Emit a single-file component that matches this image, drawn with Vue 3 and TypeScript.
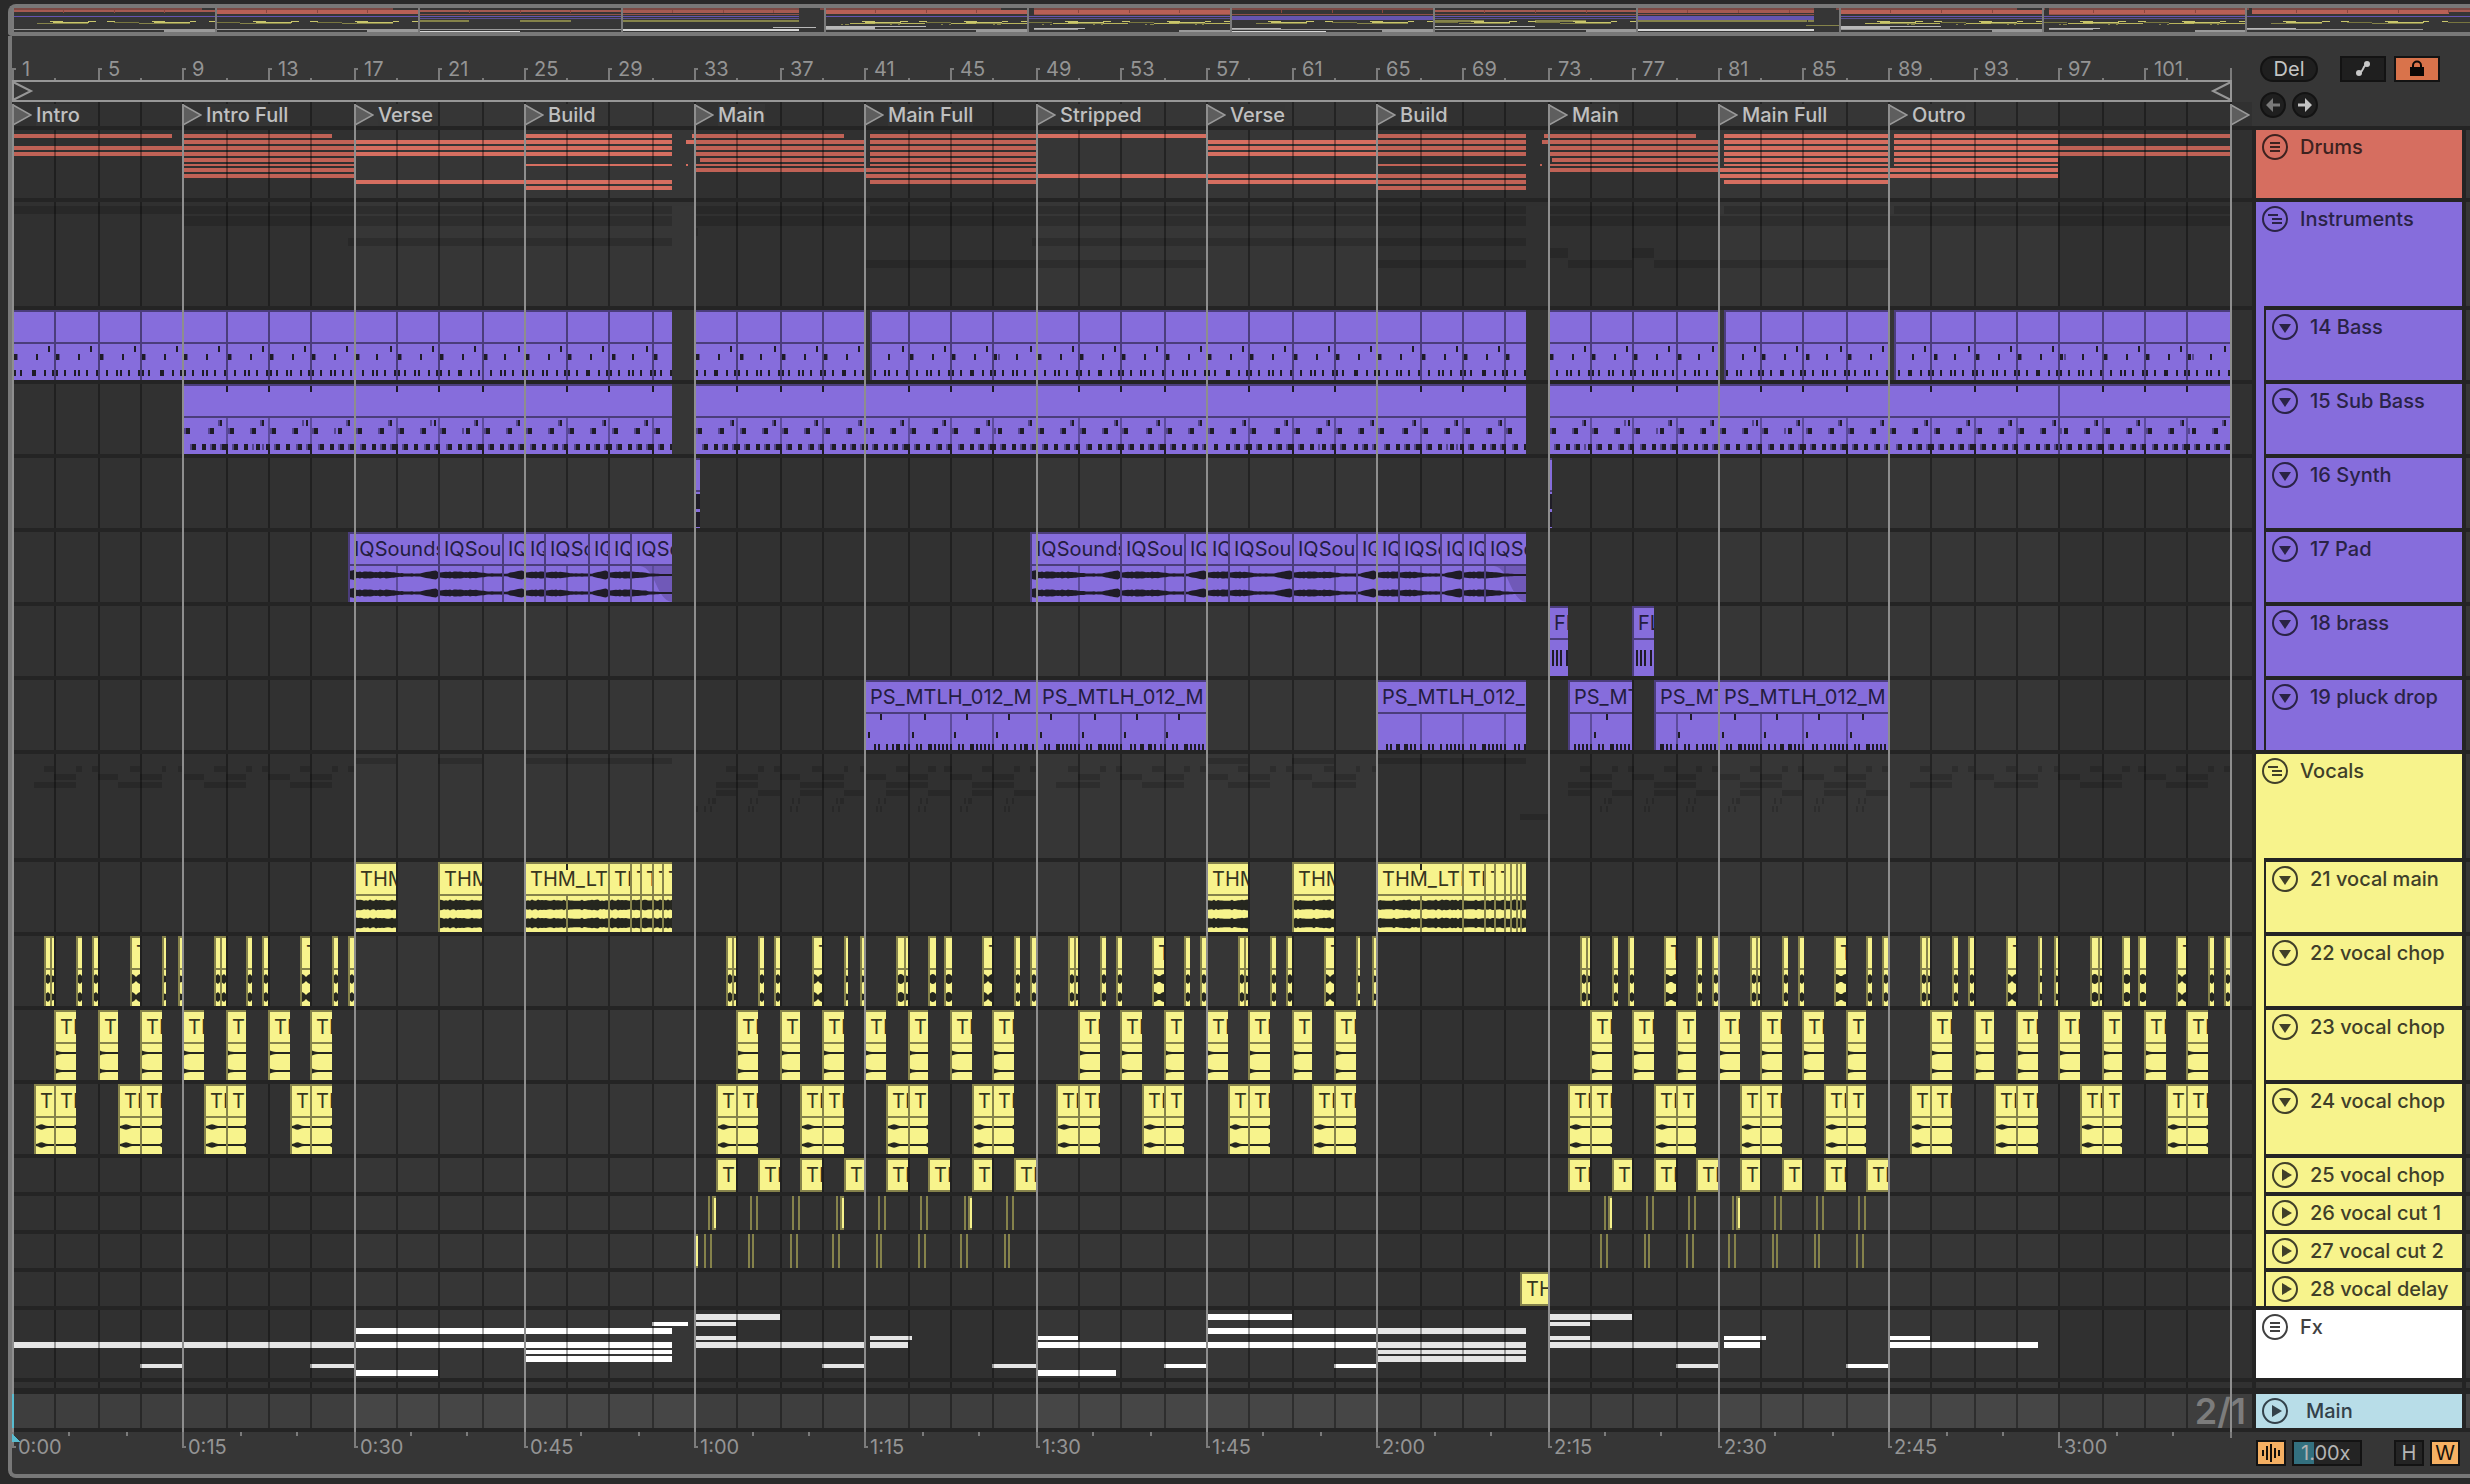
<script setup lang="ts">
import { computed, onBeforeUnmount, onMounted, ref } from 'vue'

type Span = [number, number]
type Kind = 'bass' | 'sub' | 'synth' | 'pad' | 'brass' | 'pluck' | 'vocal' | 'chop' | 'tail' | 'pair' | 'plain'
type Size = 'group' | 'large' | 'tall' | 'short'

interface Track {
  name: string
  tone: string
  size: Size
  title?: string
  kind?: Kind
  clips?: Span[]
  child?: boolean
  ghost?: boolean
  rows?: PreviewRow[]
}
interface PreviewRow {
  y: number
  h: number
  spans: Span[]
}

const BARS = 104

/* ---------- horizontal scale ---------- */
const laneEl = ref<HTMLElement | null>(null)
const laneWidth = ref(window.innerWidth - 230)
let observer: ResizeObserver | undefined
onMounted(() => {
  observer = new ResizeObserver(() => {
    if (laneEl.value) laneWidth.value = laneEl.value.clientWidth
  })
  if (laneEl.value) observer.observe(laneEl.value)
})
onBeforeUnmount(() => observer?.disconnect())

const perBar = computed(() => (laneWidth.value - 22.5) / BARS)
const snap = (bar: number) => 2 * Math.round((bar * perBar.value) / 2 - 0.03)

/* ---------- arrangement data ---------- */
const locators = [
  { bar: 0, name: 'Intro' },
  { bar: 8, name: 'Intro Full' },
  { bar: 16, name: 'Verse' },
  { bar: 24, name: 'Build' },
  { bar: 32, name: 'Main' },
  { bar: 40, name: 'Main Full' },
  { bar: 48, name: 'Stripped' },
  { bar: 56, name: 'Verse' },
  { bar: 64, name: 'Build' },
  { bar: 72, name: 'Main' },
  { bar: 80, name: 'Main Full' },
  { bar: 88, name: 'Outro' },
  { bar: 104, name: '' },
]

const every = (from: number, to: number, step: number, length = step): Span[] => {
  const out: Span[] = []
  for (let b = from; b < to; b += step) out.push([b, Math.min(b + length, to)])
  return out
}
const cuts = (...points: number[]): Span[] =>
  points.slice(1).map((p, i): Span => [points[i], p])

const phrases = [0, 8, 32, 40, 48, 56, 72, 80, 88, 96]
const chopShape: Span[] = [[1.5, 1.8], [1.8, 2], [3, 3.3], [3.75, 4.05], [5.5, 6], [7, 7.25], [7.75, 8]]
const stabs = [2, 4, 6, 8, 10, 12, 14, 34, 36, 38, 40, 42, 44, 46, 50, 52, 54, 56, 58, 60, 62,
  74, 76, 78, 80, 82, 84, 86, 90, 92, 94, 96, 98, 100, 102]
const pairs = [1, 5, 9, 13, 33, 37, 41, 45, 49, 53, 57, 61, 73, 77, 81, 85, 89, 93, 97, 101]

const thin = (bars: number[]): Span[] => bars.map((b): Span => [b, b + 0.09])

const drumRows: PreviewRow[] = [
  { y: 4, h: 4, spans: [[0, 7.5], [8, 15], [24, 31], [31.85, 39], [40.25, 56], [64, 71], [71.85, 79], [80, 80.12], [80.25, 88.12], [88.25, 104]] },
  { y: 10, h: 4, spans: [[8, 31], [31.65, 40], [40.25, 48], [56, 71], [71.75, 80], [80.25, 88], [88.25, 96]] },
  { y: 16, h: 4, spans: [[0, 31], [32, 40], [40.25, 48], [56, 71], [72, 80], [80.25, 88], [88.25, 104]] },
  { y: 22, h: 4, spans: [[0, 31], [32, 40], [40.25, 48], [56, 71], [72, 80], [80.25, 88], [88.25, 104]] },
  { y: 28, h: 4, spans: [[8, 16], [32.25, 40], [40.25, 48], [72.2, 80], [80.25, 88], [88.25, 96]] },
  { y: 34, h: 2, spans: [[8, 16], [24, 31], [31.65, 31.75], [32, 40], [40.25, 48], [64, 71], [71.7, 71.8], [72, 80], [80.25, 88], [88.25, 96]] },
  { y: 38, h: 4, spans: [[8, 16], [32, 48], [72, 96]] },
  { y: 44, h: 4, spans: [[8, 16], [40, 71], [80, 96]] },
  { y: 50, h: 4, spans: [[16, 31], [40.25, 48], [56, 71], [80.25, 88]] },
  { y: 56, h: 4, spans: [[24, 31], [64, 71]] },
]
const instrumentRows: PreviewRow[] = [
  { y: 4, h: 8, spans: [[0, 31], [32, 40], [40.25, 71], [72, 80], [80.25, 88], [88.25, 104]] },
  { y: 14, h: 10, spans: [[8, 31], [32, 71], [72, 104]] },
  { y: 26, h: 8, spans: [[32, 32.2], [72, 72.1]] },
  { y: 36, h: 8, spans: [[15.8, 31], [47.8, 71]] },
  { y: 46, h: 10, spans: [[72, 73], [76, 77]] },
  { y: 58, h: 8, spans: [[40, 56], [64, 71], [73, 76], [77, 88]] },
]
const fxRows: PreviewRow[] = [
  { y: 4, h: 6, spans: [[32, 36], [56, 60], [72, 76]] },
  { y: 12, h: 4, spans: [[30, 31.7], [32, 34], [72, 74]] },
  { y: 18, h: 6, spans: [[16, 31], [56, 71]] },
  { y: 26, h: 4, spans: [[32, 34], [40.25, 42.25], [48, 50], [72, 74], [80.25, 82.25], [88, 90]] },
  { y: 32, h: 6, spans: [[0, 31], [32, 40], [40.25, 42], [48, 71], [72, 80], [80.25, 82], [88, 95]] },
  { y: 40, h: 4, spans: [[24, 31], [64, 71]] },
  { y: 46, h: 6, spans: [[24, 31], [64, 71]] },
  { y: 54, h: 4, spans: [[6, 8], [14, 16], [38, 40], [46, 48], [54, 56], [62, 64], [78, 80], [86, 88]] },
  { y: 60, h: 6, spans: [[16, 20], [48, 51.8]] },
]

const instruments: Track[] = [
  {
    name: '14 Bass', tone: 'purple', size: 'tall', kind: 'bass', child: true,
    clips: [...every(0, 31, 2), ...every(32, 40, 2), [40.25, 42], ...every(42, 71, 2), ...every(72, 80, 2),
      [80.25, 82], ...every(82, 88, 2), [88.25, 90], ...every(90, 104, 2)],
  },
  { name: '15 Sub Bass', tone: 'purple', size: 'tall', kind: 'sub', child: true, clips: [[8, 31], [32, 71], [72, 96], [96, 104]] },
  { name: '16 Synth', tone: 'purple', size: 'tall', kind: 'synth', child: true, clips: [[32, 32.27], [72, 72.22]] },
  {
    name: '17 Pad', tone: 'purple', size: 'tall', kind: 'pad', title: 'IQSounds_Pad', child: true,
    clips: [...cuts(15.8, 20, 23, 24, 25, 27, 28, 29, 31), ...cuts(47.75, 52, 55, 56, 57, 60, 63, 64, 65, 67, 68, 69, 71)],
  },
  { name: '18 brass', tone: 'purple', size: 'tall', kind: 'brass', title: 'FL', child: true, clips: [[72, 73], [76, 77]] },
  {
    name: '19 pluck drop', tone: 'purple', size: 'tall', kind: 'pluck', title: 'PS_MTLH_012_M', child: true,
    clips: [[40, 48], [48, 56], [64, 71], [73, 76], [77, 80], [80, 88]],
  },
]

const vocals: Track[] = [
  {
    name: '21 vocal main', tone: 'yellow', size: 'tall', kind: 'vocal', title: 'THM_LTH', child: true,
    clips: [[16, 18], [20, 22], ...cuts(24, 28, 29, 29.5, 30, 30.5, 31), [56, 58], [60, 62],
      ...cuts(64, 68, 69, 69.5, 70, 70.25, 70.5, 70.75, 71)],
  },
  {
    name: '22 vocal chop', tone: 'yellow', size: 'tall', kind: 'chop', title: 'THM', child: true,
    clips: phrases.flatMap((p) => chopShape.map(([a, b]): Span => [p + a, p + b])),
  },
  { name: '23 vocal chop', tone: 'yellow', size: 'tall', kind: 'tail', title: 'THM', child: true, clips: stabs.map((b): Span => [b, b + 1]) },
  {
    name: '24 vocal chop', tone: 'yellow', size: 'tall', kind: 'pair', title: 'THM', child: true,
    clips: pairs.flatMap((b): Span[] => [[b, b + 1], [b + 1, b + 2]]),
  },
  {
    name: '25 vocal chop', tone: 'yellow', size: 'short', kind: 'plain', title: 'THM', child: true,
    clips: [...every(33, 48, 2, 1), ...every(73, 88, 2, 1)],
  },
  {
    name: '26 vocal cut 1', tone: 'yellow', size: 'short', kind: 'plain', child: true,
    clips: [...thin([32.65, 34.6, 34.9, 36.6, 36.9, 38.65, 40.6, 40.9, 42.6, 42.9, 44.65, 46.6, 46.9,
      74.65, 76.6, 76.9, 78.6, 78.9, 80.65, 82.6, 82.9, 84.6, 84.9, 86.6, 86.9]),
      [32.83, 33], [38.83, 39], [44.83, 45], [74.83, 75], [80.83, 81]],
  },
  {
    name: '27 vocal cut 2', tone: 'yellow', size: 'short', kind: 'plain', child: true,
    clips: [[32, 32.18], ...thin([32.5, 32.75, 34.5, 34.7, 36.5, 36.8, 38.5, 38.75, 40.55, 40.72, 42.5, 42.8, 44.45, 44.75, 46.5, 46.7,
      74.5, 74.75, 76.5, 76.72, 78.5, 78.75, 80.5, 80.75, 82.5, 82.7, 84.5, 84.7, 86.5, 86.75])],
  },
  { name: '28 vocal delay', tone: 'yellow', size: 'short', kind: 'plain', title: 'THM', child: true, clips: [[70.7, 72]] },
]
const vocalRows: PreviewRow[] = vocals.map((t, i) => ({ y: 4 + 8 * i, h: 6, spans: t.clips ?? [] }))

const drums: Track = { name: 'Drums', tone: 'red', size: 'group', rows: drumRows }
const instrumentGroup: Track = { name: 'Instruments', tone: 'purple', size: 'large', rows: instrumentRows, ghost: true }
const vocalGroup: Track = { name: 'Vocals', tone: 'yellow', size: 'large', rows: vocalRows, ghost: true }
const fx: Track = { name: 'Fx', tone: 'white', size: 'group', rows: fxRows }

const groups = [
  { head: drums, children: [] as Track[] },
  { head: instrumentGroup, children: instruments },
  { head: vocalGroup, children: vocals },
  { head: fx, children: [] as Track[] },
]
const tracks = groups.flatMap((g) => [g.head, ...g.children])

/* ---------- drawing helpers ---------- */
const rect = (x: number, y: number, w: number, h: number) => `M${x} ${y}h${w}v${h}h${-w}z`

const gridPath = computed(() => {
  let d = ''
  for (let b = 2; b <= BARS; b += 2) d += rect(snap(b), 0, 2, 120)
  return d
})
const shadePath = computed(() => {
  let d = ''
  for (let b = 0; b < BARS; b += 32) {
    const x = snap(b)
    d += rect(x, 0, (b + 16 > BARS ? laneWidth.value : snap(b + 16)) - x, 120)
  }
  return d
})
const rowsPath = (rows: PreviewRow[]) =>
  rows.map((r) => r.spans.map(([a, b]) => rect(snap(a), r.y, Math.max(2, snap(b) - snap(a)), r.h)).join('')).join('')

const clipWidth = ([a, b]: Span) => Math.max(2, snap(b) - snap(a))
const bounds = (clip: Span) => ({ left: `${snap(clip[0])}px`, width: `${clipWidth(clip)}px` })

/* marks inside a clip, measured from the clip's inner left edge */
const marks = (clip: Span, offsets: [number, number][], y: number, h: number) => {
  const origin = snap(clip[0]) + 2
  let d = ''
  for (let b = Math.floor(clip[0] / 2) * 2; b < clip[1]; b += 2) {
    for (const [o, w] of offsets) {
      const at = b + o
      if (at >= clip[0] && at < clip[1]) d += rect(snap(at) - origin, y, w, h)
    }
  }
  return d
}
const pluckSteps = [0, 0.4, 0.6, 0.95, 1.02, 1.25, 1.42, 1.6, 1.8].map((o): [number, number] => [o, 2])

/* every second bar line inside a clip */
const barLines = (clip: Span, y: number, h: number) => {
  let d = ''
  for (let b = Math.floor(clip[0] / 2) * 2 + 2; b < clip[1]; b += 2) d += rect(snap(b) - snap(clip[0]) - 2, y, 2, h)
  return d
}

const notes = (kind: Kind, clip: Span) => {
  if (kind === 'bass')
    return marks(clip, [[1.7, 2]], 2, 6) + marks(clip, [[0.1, 3], [1.12, 2]], 10, 6) +
      marks(clip, [[0.07, 2], [0.42, 2], [0.9, 2], [1.06, 2], [1.47, 2], [1.9, 2]], 26, 6)
  if (kind === 'sub')
    return marks(clip, [[1.75, 2]], 2, 6) + marks(clip, [[0.2, 4], [1.25, 4]], 10, 6) +
      marks(clip, [[0.02, 2], [0.42, 4], [0.9, 4], [1.4, 4], [1.87, 4]], 26, 6) + barLines(clip, 30, 6)
  if (kind === 'pluck')
    return (clip[0] === 64 ? '' : marks(clip, [[0.73, 2]], 0, 6) + marks(clip, [[0.17, 2]], 18, 6)) +
      marks(clip, pluckSteps, 30, 6)
  if (kind === 'brass') return rect(2, 10, 2, 16) + rect(6, 10, 2, 16) + rect(10, 10, 2, 16) + rect(16, 10, 2, 16)
  if (kind === 'synth') return rect(0, 2, 4, 15) + rect(0, 20, 4, 15)
  return ''
}
const softNotes = (kind: Kind, clip: Span) => {
  if (kind === 'bass') return marks(clip, [[0.2, 2]], 10, 6)
  if (kind === 'sub') return marks(clip, [[1.65, 2]], 2, 6) + marks(clip, [[0.1, 2], [1.15, 2]], 10, 6) + marks(clip, [[0.33, 2], [1.3, 2], [1.77, 2]], 26, 6)
  return ''
}
const innerGrid = (kind: Kind, clip: Span) =>
  ['sub', 'pad', 'pluck', 'vocal'].includes(kind) ? barLines(clip, 0, 36) : ''

const noise = (n: number) => {
  const s = Math.sin(n * 12.9898) * 43758.5453
  return s - Math.floor(s)
}
const amplitude = (kind: Kind, clip: Span, t: number, x: number) => {
  const bar = clip[0] + t * (clip[1] - clip[0])
  if (kind === 'vocal') return 4 + noise(x + clip[0]) * 1.6
  if (kind === 'pad') {
    if (clip[0] === 29 || clip[0] === 69) return t < 0.4 ? 3.4 - t * 3 : Math.max(1, 2.4 - t * 1.8)
    const p = (bar % 4) / 4
    if (p > 0.8) return 2 + ((p - 0.8) / 0.2) * 3
    if (p < 0.4) return 2.6 + noise(x)
    return Math.max(1.3, 3 - (p - 0.4) * 9) + noise(x) * 0.5
  }
  if (kind === 'chop') return clip[1] - clip[0] > 0.4 ? 2 + 3 * Math.abs(Math.cos(t * Math.PI)) : 5 * Math.sin(Math.PI * (0.25 + t * 0.55))
  if (kind === 'tail') return 1 + 1.6 * Math.exp(-t * 9)
  if (kind === 'pair') return clip[0] % 2 === 1 ? 1 + 1.4 * Math.exp(-(((t - 0.3) * 5) ** 2)) + (t < 0.5 ? noise(x) * 0.6 : 0) : t > 0.92 ? 2.5 : 1
  return 0
}
const wave = (kind: Kind, clip: Span) => {
  if (!['vocal', 'pad', 'chop', 'tail', 'pair'].includes(kind)) return ''
  const width = snap(clip[1]) - snap(clip[0]) - 2
  if (width < 1) return ''
  let d = ''
  for (const mid of [9, 27]) {
    const top: string[] = []
    const bottom: string[] = []
    for (let x = 0; x <= width; x += 2) {
      const a = amplitude(kind, clip, x / width, x)
      top.push(`${x} ${(mid - a).toFixed(1)}`)
      bottom.unshift(`${x} ${(mid + a).toFixed(1)}`)
    }
    d += `M${top.join('L')}L${bottom.join('L')}z`
  }
  return d
}
const isFade = (kind: Kind | undefined, clip: Span) => kind === 'pad' && (clip[0] === 29 || clip[0] === 69)

/* ---------- rulers ---------- */
const barTicks = computed(() => {
  let d = ''
  for (let b = 0; b <= BARS; b += 2) {
    const x = snap(b)
    if (b === BARS) d += rect(x, 32, 2, 12)
    else if (b % 4 === 0) d += rect(x, 32, 2, 12) + rect(x + 2, 32, 2, 2)
    else d += rect(x, 42, 2, 2)
  }
  return d
})
const barLabels = Array.from({ length: 26 }, (_, i) => i * 4)
const timeTicks = computed(() => {
  let d = ''
  for (let s = 0; s <= 190; s += 5) {
    const x = snap((s * 8) / 15)
    d += s % 15 === 0 ? rect(x, 0, 2, 16) + rect(x + 2, 14, 2, 2) : rect(x, 0, 2, 4)
  }
  return d + rect(snap(BARS), 0, 2, 6)
})
const timeLabels = Array.from({ length: 13 }, (_, i) => ({
  bar: i * 8,
  text: `${Math.floor(i / 4)}:${String((i % 4) * 15).padStart(2, '0')}`,
}))

/* ---------- overview strip ---------- */
const overBar = computed(() => (laneWidth.value + 218) / 96.85)
const strip = (spans: Span[], y: number, h: number) =>
  spans.map(([a, b]) => rect(Math.round(a * overBar.value), y, Math.max(1, Math.round((b - a) * overBar.value)), h)).join('')
const overview = computed(() => [
  { fill: '#7c4a45', d: strip(drumRows[0].spans, 0, 2) },
  { fill: '#a65a51', d: strip(drumRows[2].spans, 2, 2) },
  { fill: '#b86056', d: strip([[8, 16], [32, 40], [40.25, 48], [72, 80], [80.25, 88], [88.25, 96]], 2, 4) },
  { fill: '#8f5049', d: strip([[16, 31], [40.25, 48], [48, 71], [80.25, 88]], 6, 1) },
  { fill: '#a65a51', d: strip([[24, 31], [64, 71]], 3, 2) },
  { fill: '#6555b0', d: strip([[0, 31], [32, 71], [72, 104]], 8, 1) },
  { fill: '#5b4f92', d: strip([[16, 31], [40, 71], [72, 88]], 10, 1) },
  { fill: '#6555b0', d: strip([[48, 56], [64, 71]], 9, 3) },
  { fill: '#85834a', d: strip(vocals[0].clips ?? [], 12, 2) },
  { fill: '#c9c66c', d: strip(vocals[1].clips ?? [], 13, 1) },
  { fill: '#77753f', d: strip(vocals[2].clips ?? [], 14, 1) },
  { fill: '#c9c66c', d: strip(pairs.map((b): Span => [b + 0.6, b + 2]), 14, 1) },
  { fill: '#85834a', d: strip(pairs.map((b): Span => [b, b + 2]), 15, 1) },
  { fill: '#b8b45c', d: strip(vocals[4].clips ?? [], 15, 1) },
  { fill: '#85834a', d: strip(vocals[5].clips ?? [], 16, 1) + strip(vocals[7].clips ?? [], 17, 1) },
  { fill: '#b8b8b8', d: strip(fxRows[0].spans, 18, 1) + strip(fxRows[1].spans, 19, 1) + strip(fxRows[3].spans, 20, 1) },
  { fill: '#9a9a9a', d: strip(fxRows[4].spans, 21, 1) + strip(fxRows[7].spans, 22, 2) },
  { fill: '#d6d6d6', d: strip(fxRows[5].spans, 21, 2) + strip(fxRows[8].spans, 23, 1) },
])
const overviewTicks = computed(() => strip(every(2, 98, 2, 0.01), 2, 3))
const overviewLocators = computed(() => locators.map((l) => rect(Math.round(l.bar * overBar.value), 0, 2, 24)).join(''))

const speed = ref('1.00x')
</script>

<template>
  <main class="app">
    <div class="overview">
      <svg class="fill" aria-hidden="true">
        <path v-for="(o, i) in overview" :key="i" :d="o.d" :fill="o.fill" />
        <path :d="overviewTicks" fill="#8a463f" />
        <path :d="overviewLocators" fill="#7a7a7a" />
      </svg>
    </div>

    <div class="workspace">
      <!-- rulers and locators -->
      <div ref="laneEl" class="top">
        <div class="ruler">
          <svg class="fill" aria-hidden="true"><path :d="barTicks" fill="#7b7b7b" /></svg>
          <span v-for="b in barLabels" :key="b" class="bar-label" :style="{ left: snap(b) + 'px' }">{{ b + 1 }}</span>
        </div>
        <div class="loop">
          <svg class="fill" aria-hidden="true">
            <g fill="none" stroke="#979797" stroke-width="2">
              <path :d="`M0 1H${snap(BARS) + 2}M0 21H${snap(BARS) + 2}`" />
              <path d="M1 1v20M1 2L19 11L1 20" />
              <path :d="`M${snap(BARS) + 1} 1v20m0 -19l-18 9l18 9`" />
            </g>
          </svg>
        </div>
        <div class="markers">
          <svg class="fill" aria-hidden="true">
            <path :d="shadePath" fill="#000" fill-opacity="0.08" />
            <path :d="gridPath" fill="#000" fill-opacity="0.34" />
          </svg>
          <div v-for="l in locators" :key="l.bar" class="marker" :style="{ left: snap(l.bar) + 'px' }">
            <svg width="20" height="22" viewBox="0 0 20 22" aria-hidden="true">
              <path d="M1 1L19 11L1 21z" fill="#5e5e5e" stroke="#9a9a9a" stroke-width="1.5" />
            </svg>
            <span v-if="l.name" class="marker-name">{{ l.name }}</span>
          </div>
        </div>
      </div>

      <div class="controls">
        <div class="control-row">
          <button class="pill">Del</button>
          <button class="square auto" aria-label="Automation mode">
            <svg width="20" height="20" viewBox="0 0 20 20" aria-hidden="true">
              <circle cx="6" cy="14" r="3" fill="#c8c8c8" />
              <circle cx="14" cy="5" r="3" fill="#c8c8c8" />
              <path d="M6 14Q9 13 10 10T14 5" fill="none" stroke="#c8c8c8" stroke-width="2" />
            </svg>
          </button>
          <button class="square lock" aria-label="Lock envelopes">
            <svg width="16" height="18" viewBox="0 0 16 18" aria-hidden="true">
              <path d="M4 8V5.500a4 4 0 0 1 8 0V8" fill="none" stroke="#0c0806" stroke-width="2" />
              <rect x="1" y="7" width="14" height="9" fill="#0c0806" />
            </svg>
          </button>
        </div>
        <div class="control-row arrows">
          <button class="round dim" aria-label="Previous locator">
            <svg width="18" height="16" viewBox="0 0 18 16" aria-hidden="true">
              <path d="M2 8L9 1V6.500H16V9.500H9V15z" fill="currentColor" />
            </svg>
          </button>
          <button class="round" aria-label="Next locator">
            <svg width="18" height="16" viewBox="0 0 18 16" aria-hidden="true">
              <path d="M16 8L9 1V6.500H2V9.500H9V15z" fill="currentColor" />
            </svg>
          </button>
        </div>
      </div>

      <!-- lanes -->
      <div class="lanes">
        <div v-for="t in tracks" :key="t.name" class="lane" :class="t.size">
          <svg v-if="!t.rows" class="fill" aria-hidden="true">
            <path :d="shadePath" fill="#000" fill-opacity="0.08" />
            <path :d="gridPath" fill="#000" fill-opacity="0.34" />
          </svg>
          <svg v-else class="fill" aria-hidden="true">
            <path :d="rowsPath(t.rows)" :class="t.ghost ? 'ghost' : 'preview-' + t.tone" />
            <path :d="shadePath" fill="#000" fill-opacity="0.1" />
            <path :d="gridPath" fill="#000" fill-opacity="0.34" />
          </svg>
          <div v-for="(c, i) in t.clips ?? []" :key="i" class="clip" :class="t.tone" :style="bounds(c)">
            <div class="clip-title">
              <svg v-if="t.kind === 'sub'" class="fill" aria-hidden="true"><path :d="barLines(c, 0, 6)" fill="#1d1a26" /></svg>
              <svg v-if="t.kind === 'vocal' && c[1] - c[0] === 4" class="fill" aria-hidden="true">
                <path :d="rect(snap(c[0] + 2) - snap(c[0]) - 2, 0, 2, 6)" fill="#25251e" />
              </svg>
              <span v-if="t.title && clipWidth(c) > 8">{{ t.title }}</span>
            </div>
            <svg v-if="t.size === 'tall'" class="clip-body" aria-hidden="true">
              <path v-if="isFade(t.kind, c)" d="M8 0C24 2 24 34 40 36V0z" fill="#7059b8" />
              <path v-if="t.kind !== 'vocal'" :d="innerGrid(t.kind!, c)" class="inner-grid" />
              <path :d="softNotes(t.kind!, c)" class="soft" />
              <path :d="notes(t.kind!, c) + wave(t.kind!, c)" class="ink" />
              <path v-if="t.kind === 'vocal'" :d="innerGrid(t.kind, c)" class="inner-grid" />
            </svg>
          </div>
        </div>
        <div class="lane spare">
          <svg class="fill" aria-hidden="true">
            <path :d="shadePath" fill="#000" fill-opacity="0.08" />
            <path :d="gridPath" fill="#000" fill-opacity="0.34" />
          </svg>
        </div>
        <div class="lane short master">
          <svg class="fill" aria-hidden="true">
            <path :d="shadePath" fill="#000" fill-opacity="0.1" />
            <path :d="gridPath" fill="#000" fill-opacity="0.34" />
          </svg>
          <span class="zoom">2/1</span>
        </div>
      </div>

      <!-- track headers -->
      <div class="side">
        <div class="heads">
          <template v-for="g in groups" :key="g.head.name">
            <div class="group-block">
              <div class="head" :class="[g.head.tone, g.head.size]">
                <button class="fold" :aria-label="'Unfold ' + g.head.name">
                  <svg width="26" height="26" viewBox="0 0 26 26" aria-hidden="true">
                    <circle cx="13" cy="13" r="12" fill="none" stroke="currentColor" stroke-width="2" />
                    <path v-if="g.children.length" d="M6 9h10M10 13h10M10 17h10" stroke="currentColor" stroke-width="2" />
                    <path v-else d="M8 9h10M8 13h10M8 17h10" stroke="currentColor" stroke-width="2" />
                  </svg>
                </button>
                <span>{{ g.head.name }}</span>
              </div>
              <div v-if="g.children.length" class="children" :class="'rail-' + g.head.tone">
                <div v-for="t in g.children" :key="t.name" class="head" :class="[t.tone, t.size]">
                  <button class="fold" :aria-label="'Fold ' + t.name">
                    <svg width="26" height="26" viewBox="0 0 26 26" aria-hidden="true">
                      <circle cx="13" cy="13" r="12" fill="none" stroke="currentColor" stroke-width="2" />
                      <path v-if="t.size === 'tall'" d="M7 10H19L13 19z" fill="currentColor" />
                      <path v-else d="M10 7V19L20 13z" fill="currentColor" />
                    </svg>
                  </button>
                  <span>{{ t.name }}</span>
                </div>
              </div>
            </div>
          </template>
          <div class="spare"></div>
          <div class="head short blue">
            <button class="fold" aria-label="Unfold Main">
              <svg width="26" height="26" viewBox="0 0 26 26" aria-hidden="true">
                <circle cx="13" cy="13" r="12" fill="none" stroke="currentColor" stroke-width="2" />
                <path d="M10 7V19L20 13z" fill="currentColor" />
              </svg>
            </button>
            <span class="main-name">Main</span>
          </div>
        </div>
        <div class="edge">
          <div v-for="t in tracks" :key="t.name" :class="t.size"></div>
          <div class="spare"></div>
          <div class="short master"></div>
        </div>
      </div>

      <!-- locator lines run through the marker row and every lane -->
      <div class="lines">
        <svg class="fill" aria-hidden="true">
          <rect v-for="l in locators" :key="l.bar" :x="snap(l.bar)" y="0" width="2" height="100%" fill="#8e8e8e" />
        </svg>
      </div>
      <div class="playhead"></div>

      <!-- time ruler and footer -->
      <div class="time">
        <svg class="fill" aria-hidden="true">
          <path :d="timeTicks" fill="#7b7b7b" />
          <path d="M0 2V10H8z" fill="#58bcd0" />
        </svg>
        <span v-for="l in timeLabels" :key="l.bar" class="time-label" :style="{ left: snap(l.bar) + 'px' }">{{ l.text }}</span>
      </div>
      <div class="status">
        <button class="toggle on" aria-label="Waveform zoom">
          <svg width="20" height="18" viewBox="0 0 20 18" aria-hidden="true">
            <path d="M2 6v6M6 2v14M10 0v18M14 4v10M18 6v6" stroke="#15100a" stroke-width="2" />
          </svg>
        </button>
        <input v-model="speed" class="speed" aria-label="Waveform vertical zoom" />
        <button class="toggle height">H</button>
        <button class="toggle on">W</button>
      </div>
    </div>
  </main>
</template>

<style>
html,
body {
  background: #2a2a2a;
}
</style>

<style scoped>
.app {
  padding: 4px 0 6px 8px;
  font: 400 20px/26px Inter, "Liberation Sans", sans-serif;
  color: #b8b8b8;
  overflow: hidden;
}
.app *,
.app {
  box-sizing: border-box;
}
button,
input {
  font: inherit;
  padding: 0;
  margin: 0;
  color: inherit;
}
.fill {
  position: absolute;
  inset: 0;
  width: 100%;
  height: 100%;
  overflow: hidden;
  shape-rendering: crispEdges;
}
.loop .fill {
  shape-rendering: auto;
}
.overview {
  position: relative;
  height: 32px;
  border: 4px solid #787878;
  border-right: 0;
  border-radius: 8px 0 0 4px;
  background: #363636;
}
.workspace {
  display: grid;
  grid-template-columns: minmax(0, 1fr) 218px;
  border-left: 4px solid #787878;
  border-bottom: 4px solid #787878;
  border-bottom-left-radius: 8px;
  background: #363636;
}

/* rulers */
.top {
  grid-area: 1 / 1;
}
.ruler {
  position: relative;
  height: 44px;
}
.bar-label {
  position: absolute;
  top: 20px;
  padding-left: 10px;
  color: #949494;
}
.loop {
  position: relative;
  height: 22px;
}
.markers {
  position: relative;
  height: 24px;
}
.marker {
  position: absolute;
  top: 2px;
  display: flex;
  gap: 4px;
  height: 22px;
  line-height: 22px;
}
.marker-name {
  background: #353535;
  color: #c0c0c0;
  font-weight: 500;
  white-space: nowrap;
}

/* top right controls */
.controls {
  grid-area: 1 / 2;
  padding: 20px 0 0 8px;
}
.control-row {
  display: flex;
}
.arrows {
  margin-top: 10px;
  gap: 6px;
}
.pill,
.square,
.round {
  display: flex;
  align-items: center;
  justify-content: center;
  height: 26px;
  border: 2px solid #131313;
  background: #1f1f1f;
  color: #c4c4c4;
}
.pill {
  width: 58px;
  border-radius: 13px;
}
.square {
  width: 46px;
}
.auto {
  margin-left: 22px;
}
.lock {
  margin-left: 8px;
  background: #d9734b;
}
.round {
  width: 26px;
  border-radius: 50%;
}
.round.dim {
  color: #7a7a7a;
}

/* lanes */
.lanes {
  grid-area: 2 / 1;
  display: flex;
  flex-direction: column;
  gap: 4px;
  padding: 4px 0;
  background: #242424;
}
.lane {
  position: relative;
  background: #363636;
  overflow: hidden;
}
.group {
  height: 68px;
}
.large {
  height: 104px;
}
.tall {
  height: 70px;
}
.short {
  height: 34px;
}
.spare {
  height: 6px;
  margin-bottom: 2px;
  background: #363636;
}
.lane.master {
  background: #464646;
}
.ghost {
  fill: #000;
  fill-opacity: 0.16;
}
.preview-red {
  fill: #d66e60;
}
.preview-white {
  fill: #fff;
}
.zoom {
  position: absolute;
  right: 6px;
  top: 0;
  font-size: 36px;
  font-weight: 600;
  line-height: 34px;
  color: #7c7c7c;
}

/* clips */
.clip {
  position: absolute;
  top: 0;
  bottom: 0;
  overflow: hidden;
  border: solid;
  border-width: 2px 0 0 2px;
}
.clip.purple {
  background: #866ddc;
  border-color: #4b3d7c;
  color: #241d40;
}
.clip.yellow {
  background: #f7f38c;
  border-color: #85824b;
  color: #37361f;
}
.clip-title {
  position: relative;
  height: 32px;
  padding-left: 4px;
  border-bottom: 2px solid;
  line-height: 30px;
  white-space: nowrap;
  overflow: hidden;
}
.purple .clip-title {
  border-color: #4b3d7c;
}
.yellow .clip-title {
  border-color: #85824b;
}
.clip-body {
  display: block;
  width: 100%;
  height: 36px;
  overflow: hidden;
}
.inner-grid {
  fill: #5c4b9b;
  shape-rendering: crispEdges;
}
.yellow .inner-grid {
  fill: #85824b;
}
.soft {
  fill: #54448e;
}
.ink {
  fill: #1f1c27;
}
.yellow .ink {
  fill: #25261f;
}

/* headers */
.side {
  grid-area: 2 / 2;
  display: flex;
  gap: 4px;
  padding: 4px 0 4px 4px;
  background: #242424;
}
.heads,
.edge {
  display: flex;
  flex-direction: column;
  gap: 4px;
}
.heads {
  width: 206px;
}
.edge {
  flex: 1;
}
.edge > div {
  background: #363636;
}
.edge .master {
  background: #464646;
}
.children {
  display: flex;
  flex-direction: column;
  gap: 4px;
  padding: 4px 0 0 2px;
  border-left: 8px solid;
}
.rail-purple {
  border-color: #866ddc;
}
.rail-yellow {
  border-color: #f7f38c;
}
.head {
  display: flex;
  align-items: flex-start;
  gap: 12px;
  padding: 4px 0 0 6px;
  font-weight: 500;
  white-space: nowrap;
}
.fold {
  flex: none;
  width: 26px;
  height: 26px;
  border: 0;
  background: none;
}
.fold svg {
  display: block;
}
.main-name {
  padding-left: 6px;
}
.head.red {
  background: #d66e60;
  color: #3d221f;
}
.head.purple {
  background: #866ddc;
  color: #2a2346;
}
.head.yellow {
  background: #f7f38c;
  color: #403f29;
}
.head.white {
  background: #fff;
  color: #404040;
}
.head.blue {
  background: #b8dde8;
  color: #33414a;
}

/* locator lines */
.lines {
  grid-area: 1 / 1 / 3 / 2;
  position: relative;
  margin-top: 68px;
  pointer-events: none;
}
.playhead {
  grid-area: 2 / 1;
  align-self: end;
  position: relative;
  width: 2px;
  height: 34px;
  margin-bottom: 4px;
  background: #58bcd0;
}

/* footer */
.time {
  grid-area: 3 / 1;
  position: relative;
  height: 42px;
}
.time-label {
  position: absolute;
  top: 2px;
  padding-left: 6px;
  color: #949494;
}
.status {
  grid-area: 3 / 2;
  display: flex;
  align-items: flex-start;
  padding: 8px 10px 0 4px;
}
.toggle {
  display: flex;
  align-items: center;
  justify-content: center;
  width: 30px;
  height: 26px;
  border: 2px solid #131313;
  background: #242424;
  color: #b4b4b4;
}
.toggle.on {
  background: #f5b063;
  color: #15100a;
}
.height {
  margin-left: auto;
  margin-right: 6px;
}
.speed {
  width: 70px;
  height: 26px;
  margin-left: 6px;
  padding-left: 7px;
  border: 2px solid #131313;
  border-radius: 0;
  background: linear-gradient(90deg, #33707f 20px, #242424 20px);
  color: #b4b4b4;
}
</style>
